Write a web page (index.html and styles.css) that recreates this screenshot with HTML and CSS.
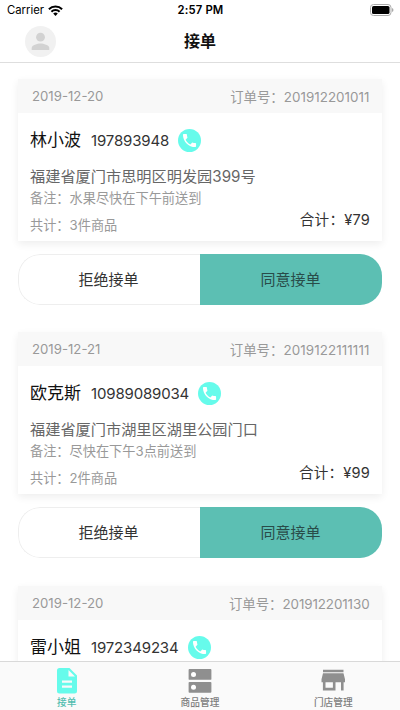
FILE: index.html
```html
<!DOCTYPE html>
<html lang="zh-CN">
<head>
<meta charset="utf-8">
<title>接单</title>
<link rel="stylesheet" href="styles.css">
</head>
<body>
<svg class="defs" width="0" height="0">
  <symbol id="phone" viewBox="0 0 24 24"><circle cx="12" cy="12" r="12" fill="#66fbeb"/><path transform="translate(2.9 2.9) scale(.76)" fill="#fff" d="M6.62 10.79c1.44 2.83 3.76 5.14 6.59 6.59l2.2-2.2c.27-.27.67-.36 1.02-.24 1.12.37 2.33.57 3.57.57.55 0 1 .45 1 1V20c0 .55-.45 1-1 1-9.39 0-17-7.61-17-17 0-.55.45-1 1-1h3.5c.55 0 1 .45 1 1 0 1.25.2 2.45.57 3.57.11.35.03.74-.25 1.02z"/></symbol>
</svg>
<div class="app">
  <div class="status">
    <div class="carrier"><span>Carrier</span><svg width="15" height="11" viewBox="0 0 15 11"><g fill="none" stroke="#000" stroke-width="2"><path d="M.9 4.2a9.3 9.3 0 0 1 13.2 0"/><path d="M3.4 6.8a5.8 5.8 0 0 1 8.2 0"/></g><path d="M5.2 8.5a3.3 3.3 0 0 1 4.6 0L7.5 10.9z"/></svg></div>
    <div class="time">2:57 PM</div>
    <svg class="battery" width="24" height="12" viewBox="0 0 24 12"><rect x=".5" y=".5" width="20.5" height="11" rx="3" fill="#fff" stroke="#aaa"/><rect x="2" y="2" width="17.5" height="8" rx="1.6"/><path d="M22 4q1.5.6 1.5 2T22 8z" fill="#aaa"/></svg>
  </div>
  <header class="nav">
    <svg class="avatar" viewBox="0 0 31 31"><circle cx="15.5" cy="15.5" r="15.5" fill="#f1f1f1"/><circle cx="15.5" cy="11.2" r="4.4" fill="#d2d2d2"/><path d="M6.7 24v-2c0-2.900 5.800-4.500 8.800-4.500s8.800 1.600 8.800 4.500v2z" fill="#d2d2d2"/></svg>
    <h1>接单</h1>
  </header>
  <main class="list">
    <section class="order">
      <article class="card">
        <div class="head"><span class="date">2019-12-20</span><span>订单号：<b class="num n1">201912201011</b></span></div>
        <div class="body">
          <div class="who"><span class="name">林小波</span><span class="tel">197893948</span><svg class="call"><use href="#phone"/></svg></div>
          <div class="addr">福建省厦门市思明区明发园399号</div>
          <div class="note">备注：水果尽快在下午前送到</div>
          <div class="foot"><span class="count">共计：3件商品</span><span class="sum">合计：¥79</span></div>
        </div>
      </article>
      <div class="actions"><div class="no">拒绝接单</div><div class="yes">同意接单</div></div>
    </section>
    <section class="order">
      <article class="card">
        <div class="head"><span class="date">2019-12-21</span><span>订单号：<b class="num n2">2019122111111</b></span></div>
        <div class="body">
          <div class="who"><span class="name">欧克斯</span><span class="tel">10989089034</span><svg class="call"><use href="#phone"/></svg></div>
          <div class="addr">福建省厦门市湖里区湖里公园门口</div>
          <div class="note">备注：尽快在下午3点前送到</div>
          <div class="foot"><span class="count">共计：2件商品</span><span class="sum">合计：¥99</span></div>
        </div>
      </article>
      <div class="actions"><div class="no">拒绝接单</div><div class="yes">同意接单</div></div>
    </section>
    <section class="order">
      <article class="card">
        <div class="head"><span class="date">2019-12-20</span><span>订单号：<b class="num">201912201130</b></span></div>
        <div class="body">
          <div class="who"><span class="name">雷小姐</span><span class="tel">1972349234</span><svg class="call"><use href="#phone"/></svg></div>
        </div>
      </article>
    </section>
  </main>
  <nav class="tabs">
    <div class="tab active"><svg width="26" height="28" viewBox="0 0 26 28"><path fill="#66fbeb" fill-rule="evenodd" d="M5.500 1h10L23 8.500V24a2.500 2.500 0 0 1-2.500 2.500h-15A2.500 2.500 0 0 1 3 24V3.500A2.500 2.500 0 0 1 5.500 1zM14.500 3v6.500H21zM8 13.500v2.300h10v-2.300zM8 18.500v2.300h10v-2.300z"/></svg><span>接单</span></div>
    <div class="tab"><svg width="26" height="28" viewBox="0 0 26 28"><path fill="#8f8f8f" d="M2.500 2h21q.9 0 .9.900v9q0 .9-.9.900h-21q-.9 0-.9-.9v-9q0-.9.900-.9zM2.500 14.900h21q.9 0 .9.900v9q0 .9-.9.900h-21q-.9 0-.9-.9v-9q0-.9.900-.9z"/><g fill="#fff"><circle cx="6.500" cy="7.400" r="2.500"/><circle cx="6.500" cy="20.300" r="2.500"/></g></svg><span>商品管理</span></div>
    <div class="tab"><svg width="26" height="28" viewBox="0 0 26 28"><path fill="#8f8f8f" fill-rule="evenodd" d="M3 2.800h20.500v2.500H3zM3 6.300h20.500l1.500 6v2.900h-1.400v8.200h-2.600v-8.200h-5.500v8.200H2.900v-8.200H1.500v-2.900zM5.500 15.200v5.500h7.400v-5.500z"/></svg><span>门店管理</span></div>
  </nav>
</div>
</body>
</html>
```
FILE: styles.css
```css
* { box-sizing: border-box; }
body {
  margin: 0;
  font-family: Inter, "Noto Sans CJK SC", sans-serif;
  background: #fff;
  color: #333;
}
.defs { position: absolute; }
.app {
  display: flex;
  flex-direction: column;
  height: 710px;
  overflow: hidden;
}
.status {
  display: grid;
  grid-template-columns: 1fr auto 1fr;
  align-items: center;
  height: 20px;
  flex: none;
  padding: 0 6px 0 7px;
  color: #000;
}
.carrier { display: flex; align-items: center; gap: 4px; font-size: 11.3px; }
.time { font-size: 11.3px; font-weight: 600; letter-spacing: .15px; }
.battery { justify-self: end; }
.nav {
  display: grid;
  grid-template-columns: 31px 1fr 31px;
  align-items: center;
  height: 43px;
  flex: none;
  padding: 0 25px;
  border-bottom: 1px solid #dedede;
}
.avatar { width: 31px; height: 31px; }
.nav h1 { margin: 0; color: #111; font-size: 16px; line-height: 24px; font-weight: 700; text-align: center; }
.list { flex: 1; min-height: 0; overflow: hidden; padding: 16px 18px 0; }
.order { height: 253.3px; }
.card { height: 162px; background: #fff; box-shadow: 0 3px 8px rgba(0,0,0,.07); }
.head {
  display: flex;
  justify-content: space-between;
  align-items: center;
  height: 34px;
  padding: 0 12.5px 0 14px;
  background: #f8f8f8;
  color: #999;
  font-size: 13.4px;
  white-space: nowrap;
}
.date { font-size: 13.2px; }
.num { font-weight: 400; letter-spacing: -.1px; }
.n1 { letter-spacing: .03px; }
.n2 { letter-spacing: .1px; }
.body { padding: 16px 12px 0; }
.who { display: flex; align-items: center; height: 23px; }
.name { color: #111; font-size: 17px; line-height: 23px; }
.tel { margin-left: 10px; color: #333; font-size: 15px; letter-spacing: -.16px; }
.call { width: 23px; height: 23px; margin-left: 9px; }
.addr { height: 22px; margin-top: 14px; color: #666; font-size: 15.2px; line-height: 22px; }
.note { height: 20px; color: #999; font-size: 13.2px; line-height: 20px; }
.foot { display: flex; justify-content: space-between; height: 28px; margin-top: 2px; }
.count { padding-top: 5px; color: #999; font-size: 13.2px; line-height: 20px; }
.sum { color: #333; font-size: 14.6px; line-height: 20px; letter-spacing: .2px; }
.actions {
  display: flex;
  height: 51px;
  margin-top: 12.5px;
  overflow: hidden;
  border-radius: 22px;
  color: #333;
  font-size: 15px;
  line-height: 51px;
  text-align: center;
}
.no { flex: 0 0 182px; padding-right: 2px; border: 1px solid #eee; border-right: 0; border-radius: 22px 0 0 22px; line-height: 49px; }
.yes { flex: 0 0 182px; padding-right: 1px; background: #5cbfb3; color: #294c49; }
.tabs {
  display: grid;
  grid-template-columns: repeat(3, 1fr);
  height: 49px;
  flex: none;
  border-top: 1px solid #d9d9d9;
  background: #fafafa;
}
.tab { display: flex; flex-direction: column; align-items: center; padding-top: 5px; color: #7d7d7d; font-size: 9.7px; line-height: 16px; font-weight: 500; }
.tab svg { display: block; }
.active { color: #52bdb0; }
```
